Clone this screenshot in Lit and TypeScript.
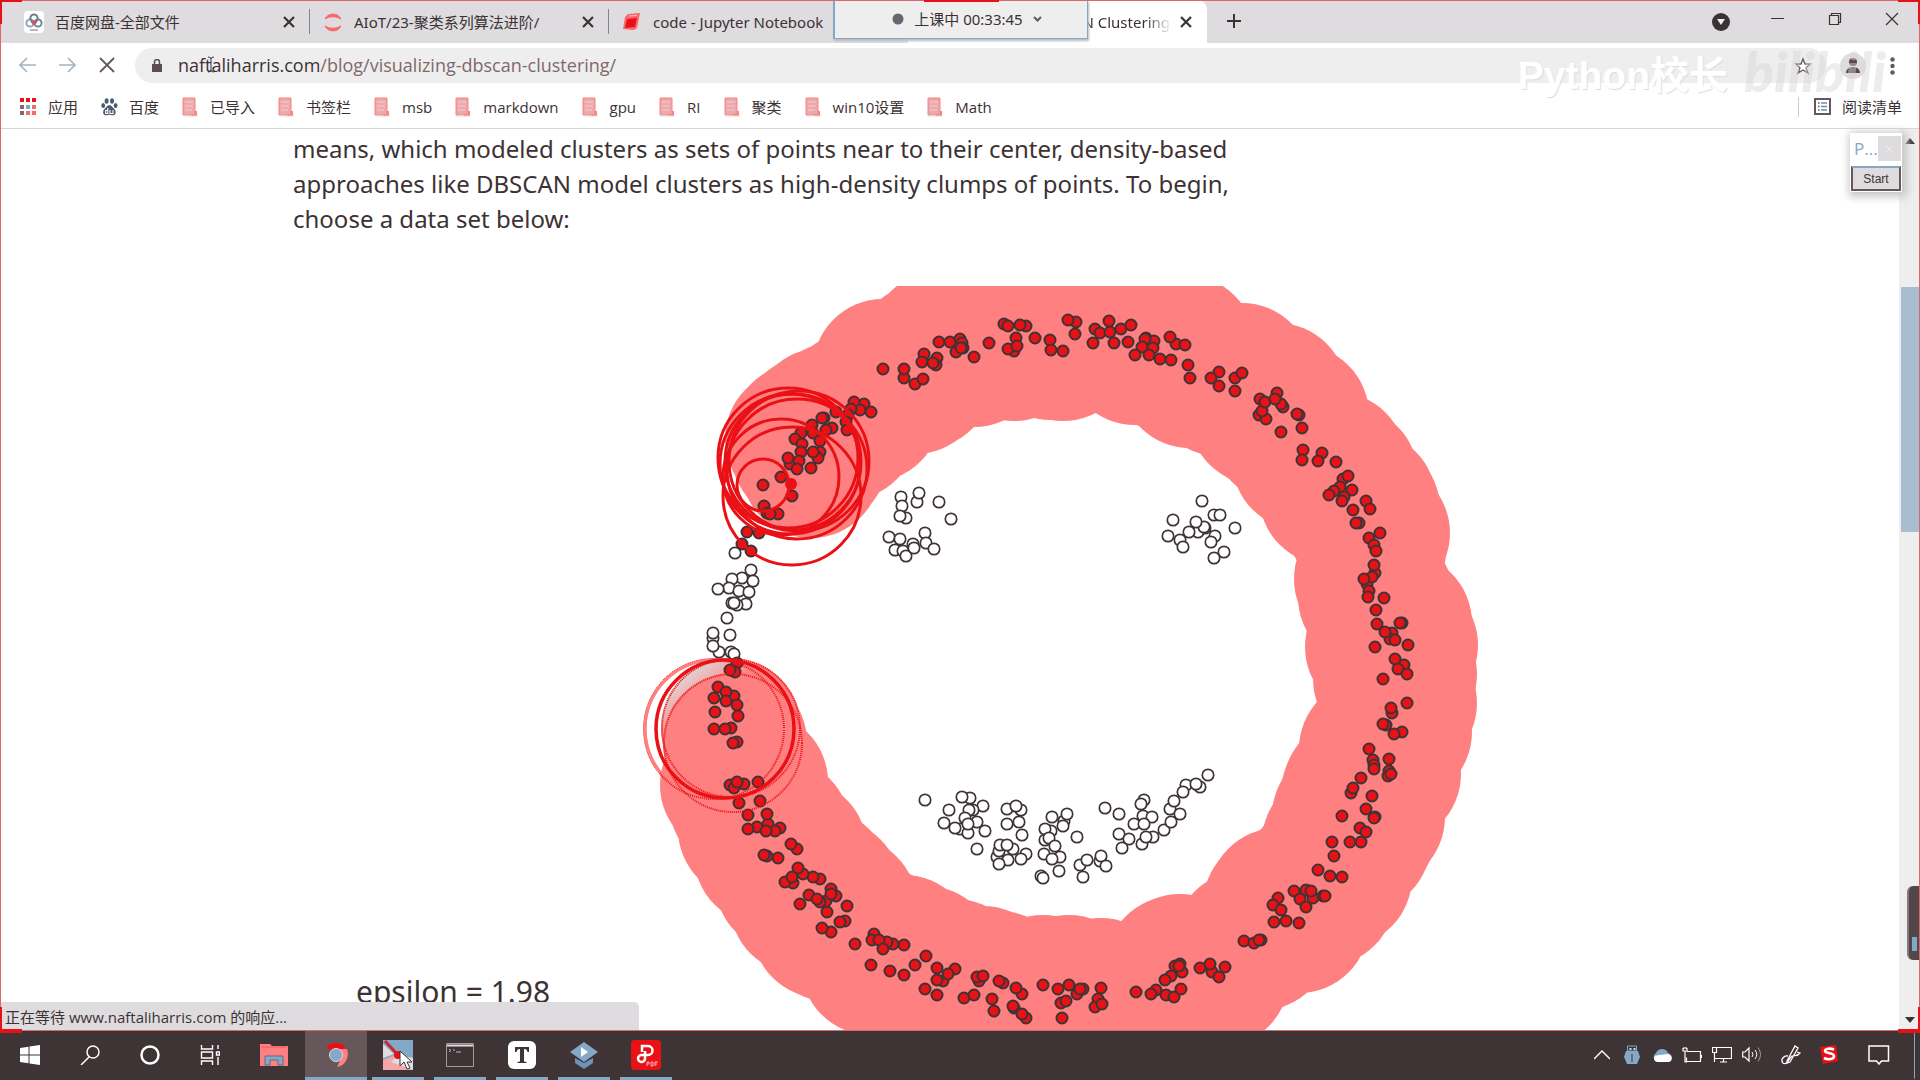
import { LitElement, html, css, svg } from "lit";
import { customElement } from "lit/decorators.js";

type Pt = number[];

const pairs = (s: string): Pt[] =>
  s.trim().split(/\s+/).map((p) => p.split(",").map(Number));

/** Points that have been assigned to the red cluster and fully expanded. */
const DONE = pairs(`
883,369 904,378 904,369 915,384 923,379 924,354 922,362 937,358 936,365 933,363 939,342 950,342 960,339
962,343 956,352 963,348 961,348 974,357 989,343 1004,324 1008,326 1026,326 1020,325 1016,338 1014,351
1008,349 1017,346 1035,338 1050,340 1051,350 1063,351 1076,322 1068,320 1075,334 1093,343 1095,329
1100,333 1110,332 1109,321 1121,329 1131,325 1114,343 1128,342 1146,338 1154,341 1153,348 1145,339
1142,347 1135,355 1149,355 1160,359 1171,360 1176,344 1170,337 1185,345 1188,365 1190,378 1219,372
1211,378 1219,386 1235,378 1242,373 1235,391 1260,399 1259,415 1266,419 1262,411 1265,402 1277,393
1283,407 1281,404 1275,399 1281,432 1299,415 1297,414 1302,428 1303,450 1302,460 1322,453 1318,461
1336,462 1343,479 1348,476 1340,487 1352,490 1344,497 1334,491 1329,495 1342,501 1353,510 1366,501
1370,509 1359,523 1356,523 1380,533 1369,538 1374,545 1376,551 1375,573 1374,565 1367,584 1372,577
1364,579 1369,591 1368,597 1384,598 1376,610 1377,624 1402,623 1400,623 1392,633 1390,639 1385,632
1395,640 1408,645 1375,647 1404,665 1395,659 1398,669 1407,674 1383,679 1407,703 1392,713 1391,708
1386,725 1383,724 1402,732 1394,734 1369,749 1373,760 1374,765 1374,769 1389,759 1389,771 1388,776
1391,774 1361,778 1351,793 1353,788 1372,796 1366,809 1375,817 1374,818 1342,816 1360,828 1366,832
1332,842 1350,842 1361,842 1334,856 1318,870 1330,876 1342,877 1294,891 1306,890 1313,898 1311,891
1300,899 1323,896 1325,896 1306,907 1278,898 1273,905 1281,910 1274,922 1286,921 1299,923 1244,941
1254,943 1261,940 1259,940 1175,966 1180,964 1182,972 1179,966 1171,976 1165,980 1200,968 1212,972
1210,964 1219,977 1225,967 1136,992 1156,990 1151,994 1166,995 1174,997 1181,989 1101,988 1098,999
1095,1007 1102,1004 1043,985 1058,989 1069,985 1083,989 1077,994 1080,989 1061,1003 1066,1001
1062,1018 1022,994 1016,988 1003,983 999,981 979,981 977,977 983,976 964,998 974,995 992,999 994,1011
1014,1008 1013,1006 1026,1018 1022,1014 937,968 943,981 937,980 955,969 948,974 925,989 937,995
926,956 915,965 904,975 890,971 871,965 904,945 893,944 887,942 874,934 872,940 879,940 883,949
855,944 831,932 822,928 845,921 840,922 847,906 827,912 836,896 831,889 826,901 831,894 820,879
820,902 813,877 803,874 798,868 793,883 785,882 792,877 800,904 809,895 817,899 778,858 767,856
764,855 797,849 791,844 780,828 768,824 775,831 757,827 766,831 748,829 767,814 748,815 760,801
739,803 758,782 730,785 734,788 744,784 737,782 737,742 733,743
801,433 795,439 802,444 824,418 822,418 812,425 813,433 832,428 826,430 820,441 820,452 818,458
801,452 813,452 811,468 836,412 864,404 854,402 860,410 851,409 871,412 848,415 846,422 847,430
`);

/** Points that belong to the cluster but are still waiting for their neighbourhood. */
const QUEUED = pairs(`
790,464 788,458 799,461 797,469 763,485 781,477 764,506 767,513 778,514 770,514 792,496 747,532
759,533 742,544 751,551 737,663 735,672 730,670 718,687 734,696 726,692 714,698 726,701 737,705
715,712 738,716 731,728 714,729 725,729
`);

/** Points not yet reached by any cluster. */
const OPEN = pairs(`
735,553 751,570 753,581 742,578 732,579 729,588 718,589 744,598 739,591 749,592 746,604 737,605
732,603 734,603 727,618 730,635 713,638 713,633 719,652 713,646 731,652 734,654
901,497 902,506 906,518 900,516 917,502 919,493 939,502 951,519 889,537 895,550 900,539 903,551
906,556 913,544 914,548 925,533 926,543 934,549
1202,501 1173,520 1168,536 1180,540 1183,547 1214,515 1220,515 1235,528 1205,528 1198,532 1204,527
1196,522 1189,532 1215,536 1211,542 1224,552 1214,558
925,800 970,798 962,797 949,810 983,806 973,810 969,810 944,823 965,818 977,822 960,829 955,828
968,833 968,824 985,831 977,849 1007,809 1021,810 1016,806 1007,824 1019,822 1022,835 997,857 999,851
1000,845 1013,849 1007,845 1026,854 1021,859 1008,860 999,864 1052,817 1064,821 1067,814 1063,826
1051,831 1045,829 1045,840 1049,838 1055,846 1077,837 1044,854 1060,857 1052,859 1059,871 1041,876
1043,878 1080,865 1087,860 1083,877 1100,861 1101,856 1106,866 1105,808 1119,814 1119,834 1129,839
1122,848 1144,800 1141,804 1143,816 1152,817 1134,824 1144,824 1142,844 1153,837 1146,837 1164,830
1170,809 1174,801 1180,814 1171,822 1186,785 1183,792 1200,787 1196,784 1208,775
`);

/** Search radii still growing: x, y, radius. */
const RINGS = pairs(`763,485,26 781,477,58 792,496,69 788,458,70 790,464,70 799,461,70 797,469,70 793,462,68`);

const EPS = 70;

@customElement("cluster-plot")
export class ClusterPlot extends LitElement {
  static styles = css`
    :host { display: block; }
    svg { display: block; width: 100%; }
    .area { fill: #ff8080; }
    .on { fill: #ea1116; stroke: #3e3436; stroke-width: 2; }
    .off { fill: #fff; stroke: #3e3436; stroke-width: 1.700; }
    .ring { fill: none; stroke: #ea1116; stroke-width: 3; }
    .bold { stroke-width: 3.500; }
    .soft { stroke: #ff8080; }
    .fine { stroke-width: 2; stroke-dasharray: 1 1; }
  `;
  render() {
    const dots = (list: Pt[], cls: string, r: number) =>
      list.map(([x, y]) => svg`<circle class=${cls} cx=${x} cy=${y} r=${r}></circle>`);
    return html`<svg viewBox="640 286 860 744" role="img" aria-label="DBSCAN">
      <defs>
        <linearGradient id="fade" x1="0.15" y1="0.1" x2="0.35" y2="0.35">
          <stop offset="0" stop-color="#dedcde"></stop>
          <stop offset="1" stop-color="#ff8080"></stop>
        </linearGradient>
      </defs>
      <circle cx="731" cy="728" r="70" fill="url(#fade)"></circle>
      ${dots(DONE, "area", EPS)}
      ${dots(OPEN, "off", 5.7)}
      <circle class="ring soft" cx="714" cy="729" r="69"></circle>
      ${dots(DONE, "on", 5.5)} ${dots(QUEUED, "on", 5.5)}
      <circle class="ring fine" cx="714" cy="729" r="70" stroke-dashoffset="1"></circle>
      <path class="ring soft" d="M660 772A69 69 0 0 1 714 660"></path>
      <circle class="ring fine" cx="733" cy="743" r="69"></circle>
      <circle class="ring fine" cx="731" cy="728" r="69"></circle>
      <circle class="ring bold" cx="725" cy="729" r="69"></circle>
      ${RINGS.map(([x, y, r]) => svg`<circle class="ring" cx=${x} cy=${y} r=${r}></circle>`)}
      <circle cx="791" cy="484" r="6" fill="#ea1116"></circle>
    </svg>`;
  }
}

const cross = html`<svg width="12" height="12" viewBox="0 0 12 12"><path d="M1 1 11 11M11 1 1 11" stroke="#3c3234" stroke-width="2.2"/></svg>`;

const folder = html`<svg width="17" height="20" viewBox="0 0 17 20"><path d="M1 1h12v17H1z" fill="#eaa9ab" stroke="#ff8080"/><path d="M3 5h8M3 9h8M3 13h7" stroke="#f4cccd"/><path d="M13 14h2v5H9v-2h4z" fill="#ff8080"/><path d="M1 19h15" stroke="#dedcde"/></svg>`;

const apps = html`<svg width="17" height="18" viewBox="0 0 17 18"><g fill="#ea1116"><path d="M0 0h4v4H0zM6 0h4v4H6zM12 0h4v4h-4z"/></g><path d="M0 7h4v4H0zM0 13h4v4H0z" fill="#82686a"/><path d="M6 7h4v4H6z" fill="#84a8c8"/><path d="M12 7h4v4h-4zM6 13h4v4H6zM12 13h4v4h-4z" fill="#f06c6e"/></svg>`;

const paw = html`<svg width="17" height="18" viewBox="0 0 17 18"><g fill="#4d5b70"><ellipse cx="5.6" cy="3" rx="2" ry="2.8"/><ellipse cx="11" cy="3" rx="2" ry="2.8"/><ellipse cx="2.2" cy="7.4" rx="1.9" ry="2.5"/><ellipse cx="14.6" cy="7.4" rx="1.9" ry="2.5"/><path d="M8.4 7c2 0 3 2.300 4.700 3.700 2.200 1.900 2.400 6.600-1.400 6.600-1.500 0-2-.5-3.300-.5s-1.900.5-3.300.5c-3.700 0-3.700-4.600-1.400-6.600C5.400 9.300 6.400 7 8.400 7z"/></g><path d="M6.800 10v5.500H4.700v-3h2M9 12v3.500h3V12" fill="none" stroke="#fff" stroke-width="1.100"/></svg>`;

const BOOKMARKS = ["已导入", "书签栏", "msb", "markdown", "gpu", "RI", "聚类", "win10设置", "Math"];

@customElement("browser-chrome")
export class BrowserChrome extends LitElement {
  static styles = css`
    :host { display: block; color: #3c3234; font: 15px/20px "Open Sans", "Noto Sans CJK SC", sans-serif; }
    svg { display: block; flex: none; }
    button { background: none; border: 0; padding: 0; margin: 0; display: grid; place-items: center; font: inherit; color: inherit; }
    a { color: inherit; text-decoration: none; }
    .strip { display: flex; height: 43px; background: #dedcde; padding-left: 11px; font-family: "Noto Sans", "Noto Sans CJK SC", sans-serif; }
    .tab { box-sizing: border-box; flex: 0 1 299px; min-width: 0; display: flex; align-items: center; gap: 10px; padding: 0 15px 0 12px; position: relative; }
    .tab a { flex: 1; white-space: nowrap; overflow: hidden; }
    .rule::after { content: ""; width: 1px; height: 25px; background: #82858f; position: absolute; right: 0; top: 9px; }
    .current { background: #fff; border-radius: 9px 9px 0 0; }
    .current a { text-align: right; mask-image: linear-gradient(90deg, #000 90%, #0001); }
    .plus { width: 54px; padding-bottom: 2px; }
    .window { margin-left: auto; display: flex; align-items: center; padding-bottom: 6px; }
    .window button { width: 57px; height: 32px; }
    .bar { display: flex; align-items: center; height: 45px; background: #fff; padding: 0 25px 0 7px; }
    .nav { width: 40px; height: 36px; padding-bottom: 1px; }
    .pill { flex: 1; display: flex; align-items: center; gap: 14px; height: 35px; border-radius: 18px; background: #eee; margin-left: 8px; padding: 0 14px 0 15px; }
    .address { flex: 1; display: flex; font-size: 18px; line-height: 26px; padding-bottom: 2px; }
    .path { color: #82686a; }
    .avatar { margin: 0 24px 0 14px; }
    .marks { display: flex; align-items: center; gap: 23px; height: 37px; background: #fff; border-bottom: 1px solid #d8d5d7; padding: 0 18px 3px 20px; }
    .mark { display: flex; align-items: center; gap: 11px; white-space: nowrap; }
    .reading { margin-left: auto; border-left: 1px solid #cfcbcd; padding-left: 15px; }
  `;
  render() {
    return html`
      <div class="strip">
        <div class="tab rule">
          <svg width="22" height="22" viewBox="0 0 22 22"><rect x="1" width="20" height="22" rx="4" fill="#fff"/><g fill="none" stroke-width="2"><circle cx="7" cy="12" r="3.600" stroke="#84a8c8"/><circle cx="15" cy="12" r="3.600" stroke="#6a86a4"/><circle cx="11" cy="7" r="3.600" stroke="#6a7f98"/><path d="m8 10 3 3 3-3" stroke="#ea4a4e"/></g><path d="M7 19h8" stroke="#82686a"/></svg>
          <a href="#">百度网盘-全部文件</a><button aria-label="关闭">${cross}</button>
        </div>
        <div class="tab rule">
          <svg width="22" height="22" viewBox="0 0 22 22"><path d="M3 8a9 9 0 0 1 16 0 12 9 0 0 0-16 0zM3 15a9 9 0 0 0 16 0 12 9 0 0 1-16 0z" fill="#f8686b" stroke="#f8686b"/></svg>
          <a href="#">AIoT/23-聚类系列算法进阶/</a><button aria-label="关闭">${cross}</button>
        </div>
        <div class="tab">
          <svg width="22" height="22" viewBox="0 0 22 22"><path d="m7 3 12-1-3 15-3 2-11-1 2-12z" fill="#f8686b"/><path d="m6 8 10-1-2 9-10 1z" fill="#ea1116"/><path d="m8 5 8-.6" stroke="#fbb"/></svg>
          <a href="#">code - Jupyter Notebook</a>
        </div>
        <div class="tab current">
          <a href="#">N Clustering</a><button aria-label="关闭">${cross}</button>
        </div>
        <button class="plus" aria-label="新标签页"><svg width="14" height="14" viewBox="0 0 14 14"><path d="M7 0v14M0 7h14" stroke="#3c3234" stroke-width="2"/></svg></button>
        <div class="window">
          <button aria-label="搜索标签页"><svg width="18" height="26" viewBox="0 0 18 26"><circle cx="9" cy="16" r="9" fill="#3c3234"/><path d="M5 13h8l-4 6z" fill="#eee"/></svg></button>
          <button aria-label="最小化"><svg width="13" height="13" viewBox="0 0 13 13"><path d="M0 6.500h13" stroke="#3c3234"/></svg></button>
          <button aria-label="还原"><svg width="14" height="14" viewBox="0 0 14 14"><path d="M1.500 3.500h9v9h-9zM3.500 3V1.500h9v9H11" fill="none" stroke="#3c3234" stroke-width="1.200"/></svg></button>
          <button aria-label="关闭窗口"><svg width="14" height="14" viewBox="0 0 14 14"><path d="m1 1 12 12M13 1 1 13" stroke="#3c3234" stroke-width="1.200"/></svg></button>
        </div>
      </div>
      <div class="bar">
        <button class="nav" aria-label="后退"><svg width="17" height="16" viewBox="0 0 17 16"><path d="M17 8H1M8 1 1 8l7 7" fill="none" stroke="#a3b4c6" stroke-width="1.600"/></svg></button>
        <button class="nav" aria-label="前进"><svg width="17" height="16" viewBox="0 0 17 16"><path d="M0 8h16M9 1l7 7-7 7" fill="none" stroke="#a3b4c6" stroke-width="1.600"/></svg></button>
        <button class="nav" aria-label="停止"><svg width="16" height="16" viewBox="0 0 16 16"><path d="m1 1 14 14M15 1 1 15" stroke="#66585a" stroke-width="1.800"/></svg></button>
        <div class="pill">
          <svg width="14" height="14" viewBox="0 0 14 14"><path d="M2 5h10v8H2z" fill="#5c4d50"/><path d="M4.500 5V3a2.500 2.500 0 0 1 5 0v2" fill="none" stroke="#5c4d50" stroke-width="1.500"/></svg>
          <div class="address"><span>naftaliharris.com</span><span class="path">/blog/visualizing-dbscan-clustering/</span></div>
          <svg width="18" height="18" viewBox="0 0 18 18"><path d="m9 2 2 5h5l-4 4 2 5-5-3-5 3 2-5-4-4h5z" fill="#fff" stroke="#6a5a5c" stroke-width="1.400"/></svg>
        </div>
        <svg class="avatar" width="26" height="28" viewBox="0 0 26 28"><circle cx="13" cy="14" r="13" fill="#dedcde"/><circle cx="13" cy="10" r="4" fill="#5a4a4c"/><path d="M6 21c0-8 14-8 14 0z" fill="#5a4a4c"/></svg>
        <svg width="5" height="18" viewBox="0 0 5 18"><g fill="#66585a"><circle cx="2.500" cy="2.500" r="2.200"/><circle cx="2.500" cy="9" r="2.200"/><circle cx="2.500" cy="15.500" r="2.200"/></g></svg>
      </div>
      <nav class="marks">
        <a class="mark" href="#">${apps}应用</a>
        <a class="mark" href="#">${paw}百度</a>
        ${BOOKMARKS.map((b) => html`<a class="mark" href="#">${folder}${b}</a>`)}
        <a class="mark reading" href="#"><svg width="17" height="17" viewBox="0 0 17 17"><path d="M1 1h15v15H1z" fill="#fff" stroke="#66585a" stroke-width="2"/><path d="M4 5h1.500M4 8.500h1.500M4 12h1.500" stroke="#66585a" stroke-width="1.500"/><path d="M7 5h6M7 8.500h6M7 12h6" stroke="#6d8dab" stroke-width="1.500"/></svg>阅读清单</a>
      </nav>`;
  }
}

const APPS = [
  { name: "文件资源管理器", open: false, icon: html`<svg width="28" height="24" viewBox="0 0 28 24"><path d="M0 1h10l2 2h16v20H0z" fill="#ff8080"/><path d="M1 4h26" stroke="#ea5a5c"/><path d="M5 22v-9h18v9h-5v-5h-8v5z" fill="#84a8c8" stroke="#5a6d82"/></svg>` },
  { name: "Chrome", open: true, icon: html`<svg width="28" height="28" viewBox="0 0 28 28"><path d="M4 7A12 12 0 0 1 24 7l-10 3z" fill="#ea1116"/><path d="M14 8h11c3 8-2 17-10 18l4-9z" fill="#ff8080"/><path d="M4 8c-4 7 0 17 10 18l2-5-8-5z" fill="#66585a"/><circle cx="14" cy="14" r="6.500" fill="#84a8c8" stroke="#dedcde"/></svg>` },
  { name: "录制", open: true, icon: html`<svg width="30" height="30" viewBox="0 0 30 30"><path d="M0 0h30v30H0z" fill="#84a8c8"/><path d="M0 20 15 14l15 16H0z" fill="#f4a6a8"/><path d="M8 22 15 15 30 18v12z" fill="#dedcde"/><path d="m2 1 12 13" stroke="#c62a30" stroke-width="3"/><path d="M0 4v14l11-4z" fill="#dedcde"/><circle cx="15" cy="15" r="4" fill="#ea1116"/></svg>` },
  { name: "终端", open: true, icon: html`<svg width="28" height="24" viewBox="0 0 28 24"><path d="M.5.500h27v23H.5z" fill="#3e3436" stroke="#a89a9c"/><path d="M1 2.500h26" stroke="#dedcde" stroke-width="2"/><path d="m3 6 2 1.500L3 9M7 7h2M10 9h5" fill="none" stroke="#bfb6b8"/></svg>` },
  { name: "Typora", open: true, icon: html`<svg width="28" height="28" viewBox="0 0 28 28"><rect width="28" height="28" rx="6" fill="#fff"/><path d="M7 6h14v5h-1.500c-.5-2-1-3-3.500-3v12.500l2.500.5v1h-9v-1l2.500-.5V8C9.500 8 9 9 8.500 11H7z" fill="#3e3436"/></svg>` },
  { name: "播放器", open: true, icon: html`<svg width="30" height="28" viewBox="0 0 30 28"><path d="m6 17 9 5 9-5v5l-9 6-9-6z" fill="#6d93b6"/><path d="m15 1 14 10-14 10L1 11z" fill="#84a8c8"/><path d="m12 6 7 5-7 5z" fill="#fff"/></svg>` },
  { name: "PDF", open: true, icon: html`<svg width="30" height="30" viewBox="0 0 30 30"><rect width="30" height="30" rx="4" fill="#ea1116"/><path d="M11 12V6h6a4.500 4.500 0 0 1 0 9h-6a3.500 3.500 0 1 0 3 4v-8" fill="none" stroke="#fff" stroke-width="2.500"/><path d="M16 22v4M16 22h2v2h-2M20 22v4h2v-4zM24 26v-4h3M24 24h2" fill="none" stroke="#ffb0b0"/></svg>` },
];

@customElement("task-bar")
export class TaskBar extends LitElement {
  static styles = css`
    :host { display: flex; justify-content: space-between; height: 49px; background: #3e3436; border-top: 1px solid #82686a; }
    svg { display: block; }
    .group { display: flex; }
    button { background: none; border: 0; border-bottom: 3px solid transparent; padding: 1px 0 0; display: grid; place-items: center; color: #fff; }
    .sys { width: 60px; }
    .apps { padding-left: 3px; }
    .app { width: 62px; display: grid; align-items: stretch; }
    .app button { margin: 0 5px; }
    .open button { border-bottom-color: #84a8c8; }
    .front { background: #66585a; }
    .front button { margin: 0; }
    .tray button { width: 30px; }
    .tray .pen { width: 48px; }
    .tray .ime { width: 28px; }
    .tray .notes { width: 72px; border-right: 1px solid #84a8c8; margin-right: 5px; }
  `;
  render() {
    return html`
      <div class="group">
        <button class="sys" aria-label="开始"><svg width="20" height="20" viewBox="0 0 20 20"><path d="m0 3 8.500-1.300v7.800H0zM9.500 1.500 20 0v9.500H9.500zM0 10.500h8.500v7.800L0 17zM9.500 10.500H20V20L9.500 18.500z" fill="#fff"/></svg></button>
        <button class="sys" aria-label="搜索"><svg width="20" height="20" viewBox="0 0 20 20"><circle cx="13" cy="7" r="6" fill="none" stroke="#fff" stroke-width="1.500"/><path d="m9 12-8 8" stroke="#fff" stroke-width="1.500"/></svg></button>
        <button class="sys" aria-label="Cortana"><svg width="20" height="20" viewBox="0 0 20 20"><circle cx="10" cy="10" r="8.500" fill="none" stroke="#fff" stroke-width="2.500"/></svg></button>
        <button class="sys" aria-label="任务视图"><svg width="20" height="20" viewBox="0 0 20 20"><path d="M1.500 0v4h11V0M1.500 20v-4h11v4M1.500 7h11v6h-11zM18 0v4M18 12v8M16.500 7h3v3h-3z" fill="none" stroke="#fff" stroke-width="1.400"/></svg></button>
        <div class="group apps">
          ${APPS.map((a) => html`<div class="app ${a.open ? "open" : ""} ${a.name === "Chrome" ? "front" : ""}"><button aria-label=${a.name}>${a.icon}</button></div>`)}
        </div>
      </div>
      <div class="group tray">
        <button aria-label="显示隐藏的图标"><svg width="16" height="10" viewBox="0 0 16 10"><path d="m0 9 8-8 8 8" fill="none" stroke="#fff" stroke-width="1.400"/></svg></button>
        <button aria-label="USB"><svg width="16" height="20" viewBox="0 0 16 20"><path d="M3.500 1h9v5h-9z" fill="#3e3436" stroke="#84a8c8"/><path d="M5.500 3h2v2h-2zM9.500 3h2v2h-2z" fill="#dedcde"/><path d="M2 6h12l2 6-3 7H3l-3-7z" fill="#84a8c8"/><path d="M8 9v8" stroke="#3e3436"/></svg></button>
        <button aria-label="云"><svg width="20" height="16" viewBox="0 0 20 16"><path d="M4 14a4.500 4.500 0 0 1 0-8 6.500 6.500 0 0 1 12 0c5 1 5 8 0 8z" fill="#84a8c8"/><path d="M3 14c-3-4 1-6 5-6l8-1c5 1 5 8 0 8H5z" fill="#fff"/></svg></button>
        <button aria-label="电源"><svg width="20" height="16" viewBox="0 0 20 16"><path d="M5 4.500h13.500v10H4.500v-4M19.500 8v3M1 1v3h4V1M3 4v11h2M2 0v2M4 0v2" fill="none" stroke="#fff" stroke-width="1.200"/></svg></button>
        <button aria-label="网络"><svg width="20" height="17" viewBox="0 0 20 17"><path d="M5 1.500h14.500v11H3M.5 1.500h4v5h-4zM2.500 6.500V16M8 16h7M11.500 13v3" fill="none" stroke="#fff" stroke-width="1.200"/></svg></button>
        <button aria-label="音量"><svg width="20" height="17" viewBox="0 0 20 17"><path d="M.7 6v5H3l4 4V2L3 6z" fill="none" stroke="#fff" stroke-width="1.200"/><path d="M10 6q2 2.500 0 5M13 4q3.500 4.500 0 9" fill="none" stroke="#fff"/><path d="M16 1.500q5 7 0 14" fill="none" stroke="#a89a9c"/></svg></button>
        <button class="pen" aria-label="手写笔"><svg width="20" height="20" viewBox="0 0 20 20"><path d="m6 16 8-15 3 2-8 14-3 1zM7 11c-4-1-8 4-5 7 4 3 6-5 9-7 3-1 5 1 8-3l-3-1" fill="none" stroke="#fff" stroke-width="1.300"/></svg></button>
        <button class="ime" aria-label="输入法"><svg width="20" height="19" viewBox="0 0 20 19"><path d="M1 2 17 0l2 16-15 3z" fill="#ea1116"/><path d="M15 4.500c-4-1.500-9-1-9 1.500s9 1.500 9 5-6 4-10 2" fill="none" stroke="#fff" stroke-width="2.600"/></svg></button>
        <button class="notes" aria-label="通知"><svg width="22" height="20" viewBox="0 0 22 20"><path d="M1 1h19.500v15h-7L11 19l-2.500-3H1z" fill="none" stroke="#fff" stroke-width="1.500"/></svg></button>
      </div>`;
  }
}

@customElement("app-root")
export class AppRoot extends LitElement {
  static styles = css`
    :host { display: flex; flex-direction: column; height: 100vh; overflow: hidden; position: relative; background: #fff; color: #3c3234; font-family: "Open Sans", "Noto Sans CJK SC", sans-serif; }
    svg { display: block; }
    button { padding: 0; margin: 0; border: 0; background: none; color: inherit; }
    .page { flex: 1; min-height: 0; display: flex; position: relative; }
    .view { flex: 1; min-width: 0; overflow: hidden; padding: 2px 0 0 293px; }
    .intro { margin: 0; font: 24px/35px "Noto Sans", "Open Sans", sans-serif; white-space: nowrap; }
    .demo { display: flex; align-items: flex-end; padding-top: 50px; }
    .setting { width: 284px; padding: 0 0 18px 63px; font: 30px/40px "Noto Sans", "Open Sans", sans-serif; }
    .demo cluster-plot { width: 860px; flex: none; }
    .scroll { width: 21px; flex: none; background: #eee; display: flex; flex-direction: column; align-items: center; justify-content: space-between; padding: 9px 0 7px; box-sizing: border-box; }
    .thumb { align-self: stretch; height: 245px; background: #a9bdd2; margin: 143px 1px auto 2px; }
    .status { position: absolute; left: 0; bottom: 0; width: 634px; padding: 4px 0 2px 5px; background: #dedcde; border-radius: 0 5px 0 0; font: 15px/22px "Open Sans", "Noto Sans CJK SC", sans-serif; }
    .mini { position: absolute; top: 4px; right: 18px; width: 52px; background: #fff; box-shadow: 2px 2px 8px 3px #c9c6c8; }
    .title { display: flex; justify-content: space-between; height: 33px; color: #84a8c8; font-size: 17px; line-height: 31px; padding: 0 1px 0 4px; }
    .title button { width: 25px; height: 25px; margin-top: 3px; background: #dedcde; display: grid; place-items: center; }
    .start { width: 50px; height: 25px; margin: 0 1px 1px; border: 2px solid #66585a; border-top-color: #84a8c8; background: #dedcde; font: 12px "Liberation Sans", sans-serif; display: block; }
    .timer { position: absolute; top: 0; left: 833px; width: 240px; height: 38px; display: flex; align-items: center; justify-content: center; gap: 10px; background: #eee; border-left: 2px solid #84a8c8; border-right: 1px solid #84a8c8; border-bottom: 1px solid #84a8c8; box-shadow: 1px 2px 2px #bbb; font: 15px/20px "Noto Sans", "Noto Sans CJK SC", sans-serif; white-space: nowrap; padding-left: 12px; }
    .mark { position: absolute; top: 36px; right: 34px; display: flex; align-items: center; gap: 16px; color: #fff; font: 700 39px/60px "Liberation Sans", "Noto Sans CJK SC", sans-serif; text-shadow: 1px 1px 1px #dedcde; pointer-events: none; }
    .mark span { padding-top: 10px; }
    .mark .logo { font: italic 900 55px/60px Lato, sans-serif; color: rgba(214, 212, 214, 0.45); text-shadow: none; padding: 0; }
    .frame { position: absolute; inset: 0 0 49px 0; border: 1px solid #d8686c; pointer-events: none; }
    .corner { position: absolute; width: 20px; height: 22px; border: 0 solid #ea1116; }
    .tl { left: -1px; top: -1px; border-width: 2px 0 0 2px; }
    .tr { right: -1px; top: -1px; border-width: 2px 2px 0 0; }
    .bl { left: -1px; bottom: -3px; border-width: 0 0 4px 2px; }
    .br { right: -1px; bottom: -3px; border-width: 0 2px 4px 0; }
    .top { position: absolute; top: -1px; left: 923px; width: 75px; height: 2px; background: #ea1116; }
    .drawer { position: absolute; right: 0; top: 886px; width: 13px; height: 74px; border-radius: 6px 0 0 6px; background: #51474a; border-left: 2px solid #84787b; box-sizing: border-box; display: grid; align-content: end; justify-items: end; padding: 0 3px 9px; }
    .drawer span { width: 5px; height: 14px; background: #84a8c8; }
    .beam { position: absolute; left: 207px; top: 56px; }
    .pointer { position: absolute; left: 399px; bottom: 10px; }
  `;
  render() {
    return html`
      <browser-chrome></browser-chrome>
      <main class="page">
        <div class="view">
          <p class="intro">means, which modeled clusters as sets of points near to their center, density-based<br />approaches like DBSCAN model clusters as high-density clumps of points. To begin,<br />choose a data set below:</p>
          <div class="demo">
            <div class="setting">epsilon = 1.98</div>
            <cluster-plot></cluster-plot>
          </div>
        </div>
        <div class="scroll">
          <svg width="10" height="6" viewBox="0 0 10 6"><path d="m0 6 5-6 5 6z" fill="#3c3234"/></svg>
          <div class="thumb"></div>
          <svg width="10" height="6" viewBox="0 0 10 6"><path d="m0 0 5 6 5-6z" fill="#3c3234"/></svg>
        </div>
        <div class="status">正在等待 www.naftaliharris.com 的响应...</div>
        <div class="mini">
          <div class="title"><span>P...</span><button aria-label="关闭"><svg width="8" height="8" viewBox="0 0 8 8"><path d="m1 1 6 6M7 1 1 7" stroke="#eee"/></svg></button></div>
          <button class="start">Start</button>
        </div>
      </main>
      <task-bar></task-bar>
      <div class="mark"><span>Python校长</span><span class="logo">bilibili</span></div>
      <div class="timer">
        <svg width="12" height="12" viewBox="0 0 12 12"><circle cx="6" cy="6" r="5.500" fill="#66676f"/></svg>
        <span>上课中 00:33:45</span>
        <svg width="9" height="6" viewBox="0 0 9 6"><path d="m1 1 3.500 3.500L8 1" fill="none" stroke="#66585a" stroke-width="2"/></svg>
      </div>
      <div class="drawer"><span></span></div>
      <svg class="beam" width="8" height="17" viewBox="0 0 8 17"><path d="M1 1q3 0 3 2v11q0 2-3 2M7 1Q4 1 4 3M7 16q-3 0-3-2" fill="none" stroke="#3c3234"/></svg>
      <svg class="pointer" width="14" height="20" viewBox="0 0 14 20"><path d="M1 1v15l4-4 3 7 3-1-3-6h5z" fill="#fff" stroke="#3c3234"/></svg>
      <div class="frame"><i class="corner tl"></i><i class="corner tr"></i><i class="corner bl"></i><i class="corner br"></i><i class="top"></i></div>`;
  }
}
